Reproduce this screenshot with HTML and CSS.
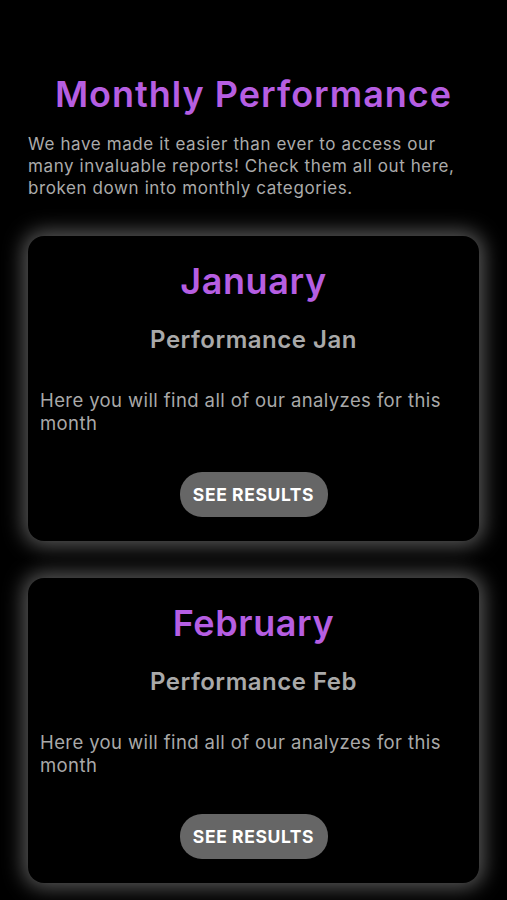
FILE: index.html
```html
<!DOCTYPE html>
<html lang="en">
<head>
<meta charset="UTF-8">
<meta name="viewport" content="width=device-width, initial-scale=1.0">
<title>Monthly Performance</title>
<link rel="stylesheet" href="styles.css">
</head>
<body>
  <main class="page">
    <h1 class="page-title">Monthly Performance</h1>
    <p class="intro">We have made it easier than ever to access our many invaluable reports! Check them all out here, broken down into monthly categories.</p>

    <!-- Month cards -->
    <section class="month-card">
      <h2 class="month-name">January</h2>
      <h3 class="month-sub">Performance Jan</h3>
      <p class="month-text">Here you will find all of our analyzes for this month</p>
      <button class="results-btn">SEE RESULTS</button>
    </section>

    <section class="month-card">
      <h2 class="month-name">February</h2>
      <h3 class="month-sub">Performance Feb</h3>
      <p class="month-text">Here you will find all of our analyzes for this month</p>
      <button class="results-btn">SEE RESULTS</button>
    </section>
  </main>
</body>
</html>
```

FILE: styles.css
```css
body {
  margin: 0;
  padding: 0;
  background-color: #000;
  font-family: Inter, "Noto Sans", sans-serif;
  overflow: hidden;
}

.page {
  padding: 72px 28px 0 28px;
  display: flex;
  flex-direction: column;
}

.page-title {
  margin: 0;
  text-align: center;
  color: #b65ee2;
  font-size: 36px;
  font-weight: 600;
  line-height: 44px;
  letter-spacing: 1px;
}

.intro {
  margin: 17px 0 37px 0;
  color: #ababab;
  font-size: 17px;
  line-height: 22px;
  letter-spacing: 0.6px;
}

.month-card {
  background-color: #000;
  border-radius: 16px;
  box-shadow: 0 0 20px 5px rgba(255, 255, 255, 0.34);
  padding: 24px 12px 24px 12px;
  margin-bottom: 37px;
  display: flex;
  flex-direction: column;
  align-items: center;
  height: 305px;
  box-sizing: border-box;
}

.month-name {
  margin: 0;
  color: #b65ee2;
  font-size: 36px;
  font-weight: 600;
  line-height: 42px;
  letter-spacing: 0.6px;
}

.month-sub {
  margin: 24px 0 0 0;
  color: #a9a9a9;
  font-size: 24px;
  font-weight: 600;
  line-height: 28px;
  letter-spacing: 0.5px;
}

.month-text {
  align-self: stretch;
  margin: 35px 0 0 0;
  color: #a9a9a9;
  font-size: 18.5px;
  line-height: 23px;
  letter-spacing: 0.4px;
}

.results-btn {
  margin-top: auto;
  width: 148px;
  height: 45px;
  border: none;
  border-radius: 22px;
  background-color: #666;
  color: #fff;
  font-family: Inter, "Noto Sans", sans-serif;
  font-size: 17.5px;
  font-weight: 700;
  letter-spacing: 0.6px;
  cursor: pointer;
}
```
